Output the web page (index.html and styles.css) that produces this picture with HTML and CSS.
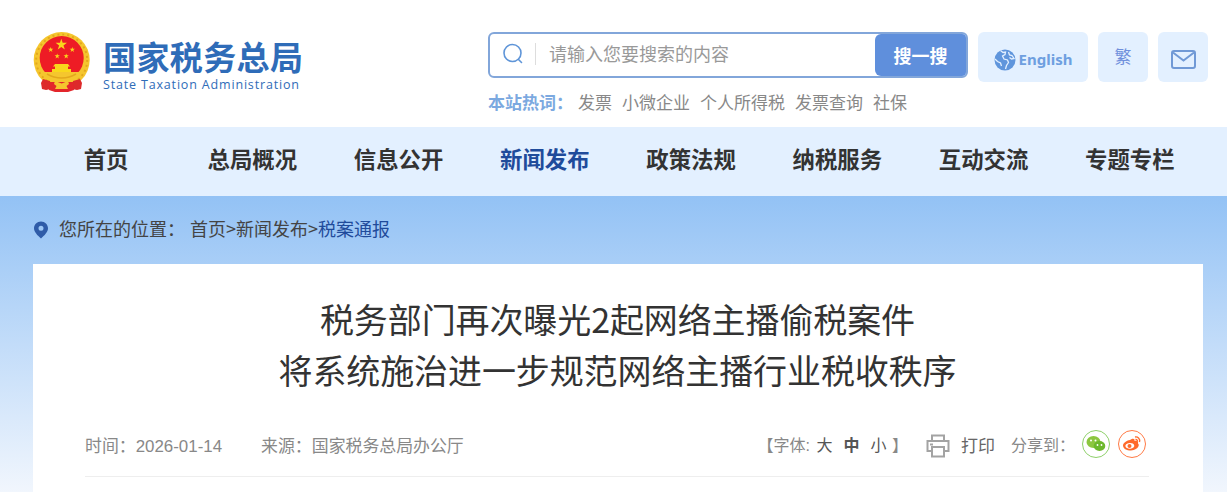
FILE: index.html
```html
<!DOCTYPE html>
<html lang="zh-CN">
<head>
  <meta charset="UTF-8" />
  <meta name="viewport" content="width=device-width, initial-scale=1.0"/>
  <title>国家税务总局</title>
  <link rel="stylesheet" href="styles.css">
</head>
<body>

  <header class="top">
    <a class="brand" href="#">
      <svg class="emblem" width="58" height="60" viewBox="0 0 58 60">
        <defs>
          <polygon id="star" fill="#f9d71c" points="0,-1 .225,-.31 .95,-.31 .36,.12 .59,.81 0,.38 -.59,.81 -.36,.12 -.95,-.31 -.225,-.31"/>
        </defs>
        <circle cx="28.700" cy="28" r="28" fill="#f5c62e"/>
        <circle cx="28.700" cy="28" r="25.500" fill="none" stroke="#e3a81d" stroke-width="2" stroke-dasharray="2 3"/>
        <circle cx="28.700" cy="26" r="22" fill="#ee1c25"/>
        <use href="#star" transform="translate(28.300 12.700) scale(6)"/>
        <use href="#star" transform="translate(17.700 17.700) scale(2.800)"/>
        <use href="#star" transform="translate(39.300 17.700) scale(2.800)"/>
        <use href="#star" transform="translate(24.200 24.200) scale(2.800)"/>
        <use href="#star" transform="translate(33.200 24.200) scale(2.800)"/>
        <path fill="#f9d71c" d="M22 32h13l2 2.500h-2V37h3v3H19v-3h3v-2.500h-2z"/>
        <path fill="#f5c62e" d="M10 40h37l-3 7-6 3H19l-6-3z"/>
        <path fill="none" stroke="#e3a81d" stroke-width="1.500" d="M14 42c5 3 9 4 14.700 4S38 45 43 42"/>
        <path fill="#dd2a2b" d="M10 47l7 2 1 8-5 1-4-1-1-6zM47 47l-7 2-1 8 5 1 4-1 1-6z"/>
        <path fill="#e3262b" d="M17 50h23l1 8-6 2H22l-6-2z"/>
        <path fill="#f5c62e" d="M22 49l6.700 2.500L35 49l1 3-2.500 2 1.500 3H22l1.500-3-2.500-2z"/>
      </svg>
      <span class="brand-text">
        <span class="brand-cn">国家税务总局</span>
        <span class="brand-en">State Taxation Administration</span>
      </span>
    </a>

    <div class="search-area">
      <form class="search">
        <svg class="search-icon" width="22" height="22" viewBox="0 0 22 22" fill="none" stroke="#5f95d8" stroke-width="1.600">
          <circle cx="10.500" cy="10" r="8.500"/>
          <path d="M16.500 16.500l3 3" stroke-linecap="round"/>
        </svg>
        <span class="search-sep"></span>
        <input class="search-input" type="text" placeholder="请输入您要搜索的内容">
        <button class="search-btn" type="button">搜一搜</button>
      </form>
      <div class="hot">
        <strong>本站热词：</strong>
        <a href="#">发票</a>
        <a href="#">小微企业</a>
        <a href="#">个人所得税</a>
        <a href="#">发票查询</a>
        <a href="#">社保</a>
      </div>
    </div>

    <div class="tools">
      <a class="tool tool-en" href="#">
        <svg width="22" height="22" viewBox="0 0 22 22">
          <circle cx="11" cy="11" r="10.500" fill="#5f95dc"/>
          <path fill="none" stroke="#e3f0ff" stroke-width="1.300" d="M6.500 1.500L9 3.500l2.500-.5-.5 2.500-2.500 1.500L10 10l3.500 1 1 2.500-2 3-1 3.500M14.500 3l1 3 2.500.5 2 3-2.500.5-2-1.500M1 10l2.500 2.500 3 1.500 1 3"/>
        </svg>
        <span>English</span>
      </a>
      <a class="tool tool-tc" href="#">繁</a>
      <a class="tool tool-mail" href="#">
        <svg width="25" height="19" viewBox="0 0 25 19" fill="none" stroke="#7099d6" stroke-width="2">
          <rect x="1" y="1" width="23" height="17" rx="2"/>
          <path d="M2 2.500l10.500 8 10.500-8"/>
        </svg>
      </a>
    </div>
  </header>

  <nav class="nav">
    <a href="#">首页</a>
    <a href="#">总局概况</a>
    <a href="#">信息公开</a>
    <a href="#" class="active">新闻发布</a>
    <a href="#">政策法规</a>
    <a href="#">纳税服务</a>
    <a href="#">互动交流</a>
    <a href="#">专题专栏</a>
  </nav>

  <main class="main">
    <div class="crumb">
      <svg width="16" height="18" viewBox="0 0 16 18">
        <path fill="#2f5ca8" fill-rule="evenodd" d="M8 .5c4 0 7 3 7 6.800 0 3.700-3.500 7.200-7 10.200C4.500 14.500 1 11 1 7.300 1 3.500 4 .5 8 .5zm0 4.300a2.500 2.500 0 1 0 0 5 2.500 2.500 0 0 0 0-5z"/>
      </svg>
      <span class="crumb-label">您所在的位置：</span>
      <a href="#">首页</a>&gt;<a href="#">新闻发布</a>&gt;<a href="#" class="current">税案通报</a>
    </div>

    <article class="card">
      <h1>税务部门再次曝光2起网络主播偷税案件<br>将系统施治进一步规范网络主播行业税收秩序</h1>
      <div class="meta">
        <div class="meta-left">
          <span>时间：2026-01-14</span>
          <span>来源：国家税务总局办公厅</span>
        </div>
        <div class="meta-right">
          <span class="font-size">【字体: <a href="#">大</a><a href="#" class="on">中</a><a href="#">小</a>】</span>
          <a class="print" href="#">
            <svg width="24" height="24" viewBox="0 0 24 24" fill="none" stroke="#a3a3a3" stroke-width="2">
              <path d="M6 7V1.500h12V7"/>
              <path d="M6 17H1.500V7h21v10H18"/>
              <path d="M6 13h12v9.500H6z"/>
              <path d="M4 10.500h3"/>
            </svg>
            打印
          </a>
          <span class="share-label">分享到：</span>
          <a class="share share-wx" href="#">
            <svg width="20" height="18" viewBox="0 0 20 18">
              <ellipse cx="7.500" cy="7" rx="7" ry="6" fill="#8cc63f"/>
              <ellipse cx="13.500" cy="11" rx="5.800" ry="5" fill="#6cb82c"/>
              <circle cx="5" cy="5.500" r="1" fill="#fff"/>
              <circle cx="9.500" cy="5.500" r="1" fill="#fff"/>
              <circle cx="11.500" cy="10" r=".9" fill="#fff"/>
              <circle cx="15.500" cy="10" r=".9" fill="#fff"/>
            </svg>
          </a>
          <a class="share share-wb" href="#">
            <svg width="20" height="18" viewBox="0 0 20 18">
              <path fill="#ff6a2b" fill-rule="evenodd" d="M8 5c3-2 5-1.500 4.500 1 3-1 4 .500 3.500 2.500 1.500.500 1.500 6-7 7-4.500 0-8-2-8-5 0-2 3-5 7-5.500zM7.500 8C4.500 8.300 3 10 3.500 11.500s2.500 2.500 5 2.200 4.200-1.800 3.700-3.400S10 7.800 7.500 8z"/>
              <circle cx="7.500" cy="11" r="2" fill="#ff6a2b"/>
              <path d="M13 2c3-.5 5.500 2 4.500 5M13.500 4.500c1.500-.2 2.300 1 2 2.200" fill="none" stroke="#ff6a2b" stroke-width="1.300"/>
            </svg>
          </a>
        </div>
      </div>
    </article>
  </main>

</body>
</html>
```

FILE: styles.css
```css
/* Base */
* {
  box-sizing: border-box;
}
html, body {
  height: 100%;
}
body {
  margin: 0;
  display: flex;
  flex-direction: column;
  overflow: hidden;
  font-family: "Liberation Sans", "Noto Sans CJK SC", sans-serif;
  color: #333;
  background: #fff;
}
a {
  color: inherit;
  text-decoration: none;
}

/* Header */
.top {
  display: flex;
  height: 127px;
  padding: 32px 19px 0 33px;
}
.brand {
  display: flex;
  align-items: flex-start;
  width: 455px;
}
.emblem {
  flex: none;
}
.brand-text {
  display: flex;
  flex-direction: column;
  margin-left: 12px;
}
.brand-cn {
  font-family: "Liberation Sans", "Noto Sans CJK SC", sans-serif;
  font-size: 33px;
  line-height: 36px;
  letter-spacing: 0.4px;
  margin-top: 9px;
  font-weight: 700;
  color: #2f6cb8;
  white-space: nowrap;
}
.brand-en {
  font-family: "Open Sans", sans-serif;
  font-size: 12.500px;
  line-height: 16px;
  letter-spacing: 0.83px;
  margin-top: 0;
  color: #2f6cb8;
  white-space: nowrap;
}

/* Search */
.search-area {
  width: 480px;
}
.search {
  display: flex;
  align-items: center;
  height: 46px;
  border: 2px solid #82a6da;
  border-radius: 6px;
  background: #fff;
  overflow: hidden;
}
.search-icon {
  flex: none;
  margin-left: 12px;
  margin-bottom: 2px;
}
.search-sep {
  flex: none;
  width: 1px;
  height: 22px;
  margin: 0 13px 2px 11px;
  background: #ddd;
}
.search-input {
  flex: 1;
  min-width: 0;
  height: 100%;
  border: none;
  outline: none;
  padding: 0 0 4px;
  font: 18px "Noto Sans CJK SC", sans-serif;
  color: #333;
}
.search-input::placeholder {
  color: #999;
  opacity: 1;
}
.search-btn {
  flex: none;
  width: 91px;
  height: 100%;
  border: none;
  border-radius: 6px 0 0 6px;
  background: #5f8fdc;
  color: #fff;
  font: 700 18px "Noto Sans CJK SC", sans-serif;
  padding: 0;
}
.hot {
  display: flex;
  align-items: center;
  margin-top: 11px;
  height: 24px;
  font-family: "Noto Sans CJK SC", sans-serif;
  font-size: 17px;
  color: #888;
  white-space: nowrap;
}
.hot strong {
  color: #7ca9e0;
  margin-right: 5px;
}
.hot a {
  margin-right: 10px;
}

/* Top right buttons */
.tools {
  display: flex;
  gap: 10px;
  margin-left: 10px;
}
.tool {
  display: flex;
  align-items: center;
  justify-content: center;
  width: 50px;
  height: 50px;
  border-radius: 6px;
  background: #e3f0ff;
}
.tool-en {
  width: 110px;
  gap: 3px;
  padding-top: 4px;
  font: 700 15px "Noto Sans", sans-serif;
  color: #6e9fe0;
}
.tool-en svg {
  margin-top: 1px;
}
.tool-tc {
  padding-bottom: 3px;
  font: 17px "Noto Sans CJK TC", sans-serif;
  color: #6f8fdc;
}
.tool-mail {
  padding-top: 4px;
}

/* Nav */
.nav {
  flex: none;
  display: grid;
  grid-template-columns: repeat(8, 1fr);
  align-items: center;
  height: 69px;
  padding: 0 24px 8px 33px;
  background: #e3f0ff;
  font-family: "Noto Sans CJK SC", sans-serif;
  font-size: 22.400px;
  font-weight: 700;
  color: #333;
  text-align: center;
}
.nav a {
  white-space: nowrap;
}
.nav .active {
  color: #1f4b9b;
}

/* Main */
.main {
  flex: 1;
  display: flex;
  flex-direction: column;
  padding: 0 24px 0 33px;
  background: linear-gradient(#93c2f5, #f1f6fd 296px);
}
.crumb {
  flex: none;
  display: flex;
  align-items: center;
  height: 68px;
  padding-bottom: 4px;
  font-family: "Noto Sans CJK SC", sans-serif;
  font-size: 18px;
  color: #444;
  white-space: nowrap;
}
.crumb svg {
  margin-top: 3px;
}
.crumb-label {
  margin: 0 5px 0 10px;
}
.crumb .current {
  color: #1f4b9b;
}

/* Article */
.card {
  flex: 1;
  padding: 29px 54px 0 52px;
  background: #fff;
}
.card h1 {
  margin: 0;
  padding-left: 1px;
  font-family: "Noto Sans CJK SC", sans-serif;
  font-weight: 400;
  font-size: 34px;
  line-height: 51px;
  letter-spacing: -0.1px;
  text-align: center;
  color: #333;
}
.meta {
  display: flex;
  justify-content: space-between;
  align-items: center;
  height: 82px;
  padding: 17px 3px 0 0;
  border-bottom: 1px solid #eee;
  font-family: "Liberation Sans", "Noto Sans CJK SC", sans-serif;
  font-size: 16.900px;
  color: #888;
}
.meta-left {
  display: flex;
  gap: 39px;
}
.meta-right {
  display: flex;
  align-items: center;
  font-size: 16px;
}
.font-size a {
  margin: 0 5.500px;
  color: #555;
}
.font-size a:first-of-type {
  margin-left: 2px;
}
.font-size a.on {
  font-weight: 700;
  color: #555;
}
.print {
  display: flex;
  align-items: center;
  gap: 11px;
  margin-left: 18px;
  font-size: 17px;
  color: #666;
}
.print svg {
  margin-top: 3px;
}
.share-label {
  margin-left: 16px;
}
.share {
  display: flex;
  align-items: center;
  justify-content: center;
  width: 28px;
  height: 28px;
  border: 1px solid;
  border-radius: 50%;
  margin-left: 8px;
}
.share-wx {
  margin-left: 7px;
  border-color: #8ed06a;
}
.share-wb {
  border-color: #ff7a45;
}
```
